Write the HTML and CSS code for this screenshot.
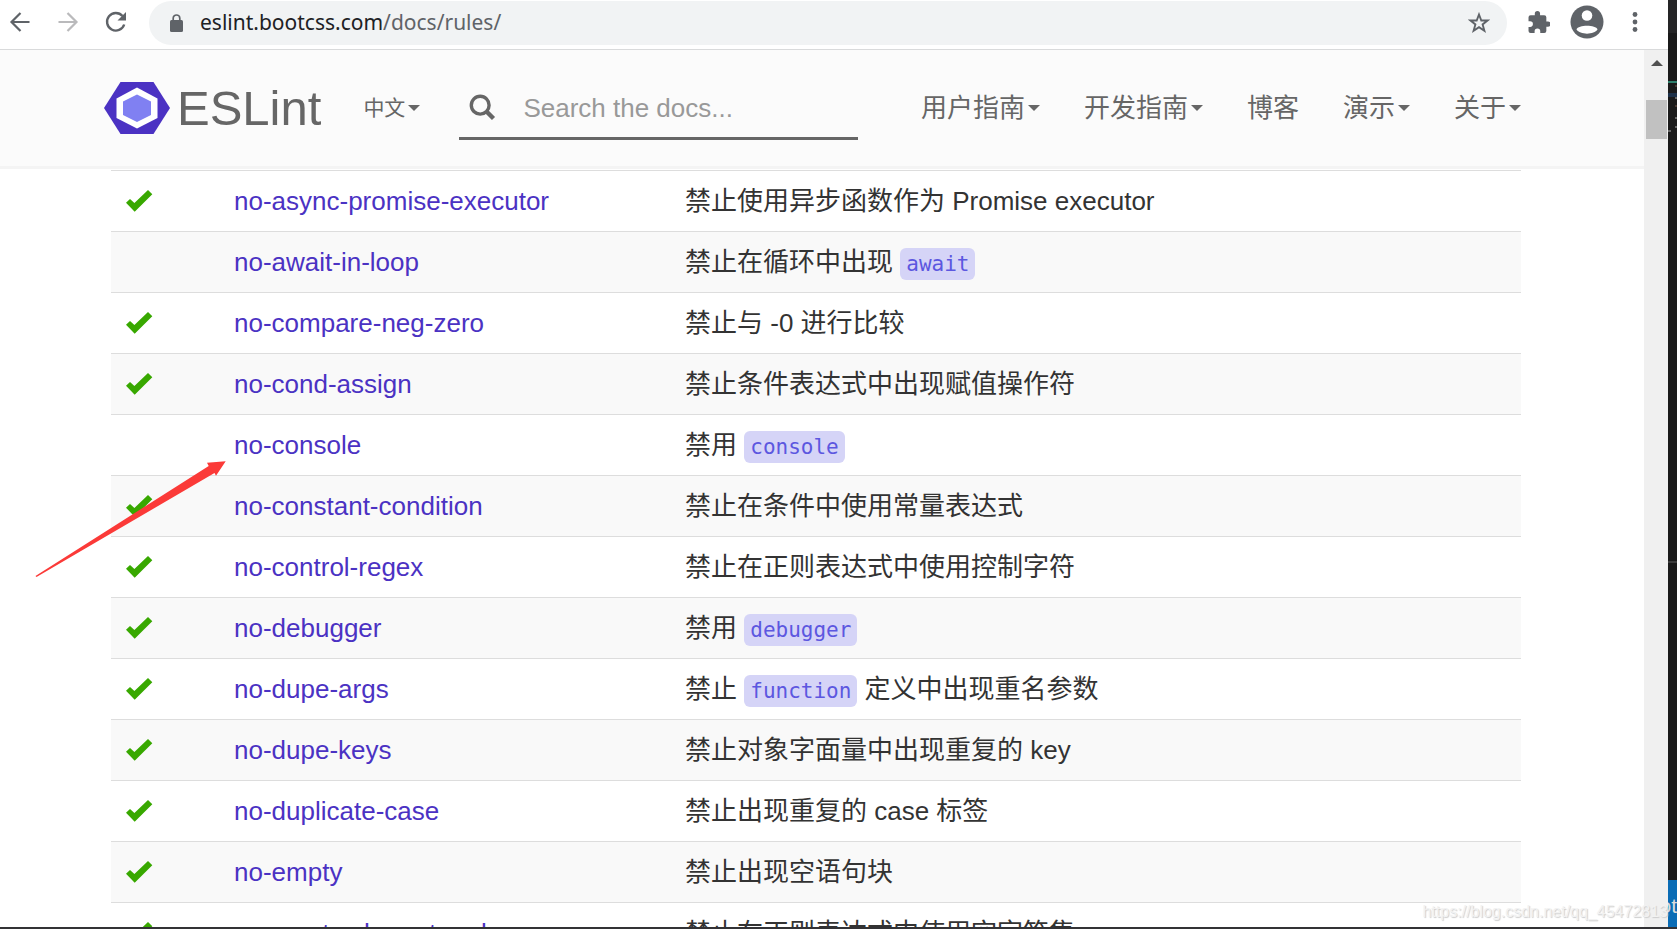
FILE: index.html
```html
<!DOCTYPE html>
<html lang="zh-CN">
<head>
<meta charset="utf-8">
<title>List of available rules - ESLint</title>
<link rel="stylesheet" href="styles.css">
</head>
<body>
<svg class="defs" aria-hidden="true">
  <symbol id="check" viewBox="0 0 27 22"><path d="M0 12.7 4 9l4.400 4L22 0l4.300 4.300L8.700 21.800z" fill="currentColor"/></symbol>
</svg>
<div class="desktop">
  <div class="browser">
    <div class="toolbar">
      <div class="toolbar-nav">
        <button type="button" aria-label="Back"><svg viewBox="0 0 22 22"><path d="M20.500 11H2.500M11.500 2 2.500 11l9 9" fill="none" stroke="#5f6368" stroke-width="2.200"/></svg></button>
        <button type="button" aria-label="Forward"><svg viewBox="0 0 22 22"><path d="M1.500 11h18M10.500 2l9 9-9 9" fill="none" stroke="#bababc" stroke-width="2.200"/></svg></button>
        <button type="button" aria-label="Reload"><svg viewBox="0 0 22 22"><path d="M19.200 13.500A8.800 8.800 0 1 1 17.500 5" fill="none" stroke="#5f6368" stroke-width="2.400"/><path d="M21 1v8.500h-8.500z" fill="#5f6368"/></svg></button>
      </div>
      <div class="address">
        <svg class="lock" viewBox="0 0 13 18"><rect x="0" y="6" width="13" height="12" rx="1.500" fill="#5f6368"/><path d="M3.200 7V4.300a3.300 3.300 0 0 1 6.600 0V7" fill="none" stroke="#5f6368" stroke-width="1.700"/></svg>
        <span class="url">eslint.bootcss.com<span class="path">/docs/rules/</span></span>
        <button type="button" aria-label="Bookmark"><svg viewBox="0 0 22 22"><path d="m11 2.500 2.300 6h6.200l-4.900 3.900 1.800 6.400L11 15.100l-5.400 3.700 1.800-6.400-4.900-3.900h6.200z" fill="none" stroke="#5f6368" stroke-width="1.900"/></svg></button>
      </div>
      <div class="toolbar-tools">
        <button type="button" aria-label="Extensions"><svg viewBox="1.500 1 21 21"><path d="M20.500 11H19V7a2 2 0 0 0-2-2h-4V3.500a2.500 2.500 0 0 0-5 0V5H4a2 2 0 0 0-2 2v3.800h1.500a2.700 2.700 0 0 1 0 5.400H2V20a2 2 0 0 0 2 2h3.800v-1.500a2.700 2.700 0 0 1 5.400 0V22H17a2 2 0 0 0 2-2v-4h1.500a2.500 2.500 0 0 0 0-5z" fill="#5f6368"/></svg></button>
        <button type="button" class="avatar" aria-label="Profile"><svg viewBox="0 0 34 34"><circle cx="17" cy="17" r="16.500" fill="#5f6368"/><circle cx="17" cy="10.500" r="5.300" fill="#fff"/><path d="M6.500 24.500C8 19.500 26 19.500 27.500 24.500 24 30 10 30 6.500 24.500z" fill="#fff"/></svg></button>
        <button type="button" class="menu" aria-label="Menu"><svg viewBox="0 0 6 22"><g fill="#5f6368"><circle cx="3" cy="3.500" r="2.400"/><circle cx="3" cy="11" r="2.400"/><circle cx="3" cy="18.500" r="2.400"/></g></svg></button>
      </div>
    </div>
    <div class="viewport">
      <div class="page">
        <header class="navbar">
          <a class="brand" href="#"><svg viewBox="0 0 66 52"><path d="M16.500 0h33L66 26 49.500 52h-33L0 26z" fill="#4b32c3"/><path d="M33 5.500 53.500 16.500v19.500L33 46.500 12.500 36V16.500z" fill="#fff"/><path d="M33 12.500 47 19.500v13.500L33 40 19 33V19.500z" fill="#8080f2"/></svg>ESLint</a>
          <a class="lang" href="#">中文<i class="caret"></i></a>
          <label class="search">
            <svg viewBox="0 0 27 27"><circle cx="11.200" cy="11.200" r="8.900" fill="none" stroke="#666" stroke-width="3.400"/><path d="m17.500 17.500 7 7" stroke="#666" stroke-width="4.400"/></svg>
            <input type="text" placeholder="Search the docs..." aria-label="Search the docs">
          </label>
          <nav class="links">
            <a href="#">用户指南<i class="caret"></i></a>
            <a href="#">开发指南<i class="caret"></i></a>
            <a href="#">博客</a>
            <a href="#">演示<i class="caret"></i></a>
            <a href="#">关于<i class="caret"></i></a>
          </nav>
        </header>
        <main>
          <table class="rules">
            <tbody>
              <tr><td class="state"><svg><use href="#check"/></svg></td><td class="name"><a href="#">no-async-promise-executor</a></td><td>禁止使用异步函数作为 Promise executor</td></tr>
              <tr><td class="state"></td><td class="name"><a href="#">no-await-in-loop</a></td><td>禁止在循环中出现 <code>await</code></td></tr>
              <tr><td class="state"><svg><use href="#check"/></svg></td><td class="name"><a href="#">no-compare-neg-zero</a></td><td>禁止与 -0 进行比较</td></tr>
              <tr><td class="state"><svg><use href="#check"/></svg></td><td class="name"><a href="#">no-cond-assign</a></td><td>禁止条件表达式中出现赋值操作符</td></tr>
              <tr><td class="state"></td><td class="name"><a href="#">no-console</a></td><td>禁用 <code>console</code></td></tr>
              <tr><td class="state"><svg><use href="#check"/></svg></td><td class="name"><a href="#">no-constant-condition</a></td><td>禁止在条件中使用常量表达式</td></tr>
              <tr><td class="state"><svg><use href="#check"/></svg></td><td class="name"><a href="#">no-control-regex</a></td><td>禁止在正则表达式中使用控制字符</td></tr>
              <tr><td class="state"><svg><use href="#check"/></svg></td><td class="name"><a href="#">no-debugger</a></td><td>禁用 <code>debugger</code></td></tr>
              <tr><td class="state"><svg><use href="#check"/></svg></td><td class="name"><a href="#">no-dupe-args</a></td><td>禁止 <code>function</code> 定义中出现重名参数</td></tr>
              <tr><td class="state"><svg><use href="#check"/></svg></td><td class="name"><a href="#">no-dupe-keys</a></td><td>禁止对象字面量中出现重复的 key</td></tr>
              <tr><td class="state"><svg><use href="#check"/></svg></td><td class="name"><a href="#">no-duplicate-case</a></td><td>禁止出现重复的 case 标签</td></tr>
              <tr><td class="state"><svg><use href="#check"/></svg></td><td class="name"><a href="#">no-empty</a></td><td>禁止出现空语句块</td></tr>
              <tr><td class="state"><svg><use href="#check"/></svg></td><td class="name"><a href="#">no-empty-character-class</a></td><td>禁止在正则表达式中使用空字符集</td></tr>
            </tbody>
          </table>
        </main>
      </div>
      <div class="scrollbar"><svg viewBox="0 0 12 6"><path d="M6 0l6 6H0z" fill="#505050"/></svg><div class="thumb"></div></div>
    </div>
  </div>
  <aside class="editor">
    <svg class="minimap" viewBox="0 0 9 140" aria-hidden="true"><path d="M0 0h9v33H0z" fill="#252526"/><path d="M0 82h9" stroke="#2f7f6c" stroke-width="2"/><path d="M0 95h9" stroke="#1d3048" stroke-width="4"/><path d="M7 86h2M7 106h2" stroke="#7a5a4c" stroke-width="1"/><path d="M7 98h2M7 118h2M7 127h2M0 131h3" stroke="#666" stroke-width="2"/></svg>
    <div class="divider"></div>
    <div class="status">ot</div>
  </aside>
</div>
<svg class="pointer" viewBox="0 0 192 118" aria-hidden="true"><path d="M.500 116 173.700 6 172 2.700 190.700 1.300 181 15.700 179.500 13 1.500 117z" fill="#fb3a38"/></svg>
<div class="watermark">https://blog.csdn.net/qq_45472813</div>
</body>
</html>
```
FILE: styles.css
```css
* { box-sizing: border-box; }
body {
  margin: 0;
  height: 100vh;
  overflow: hidden;
  position: relative;
  background: #fff;
  color: #333;
  font: 26px/36px "Liberation Sans", "Noto Sans CJK SC", sans-serif;
}
a { text-decoration: none; color: #4b32c3; }
button { border: 0; padding: 0; background: none; display: flex; }
button svg { width: 22px; height: 22px; }
svg { display: block; flex: none; }
.defs { position: absolute; width: 0; height: 0; }

.desktop { display: flex; height: 100%; border-bottom: 2px solid #323235; }
.browser { flex: 1; min-width: 0; display: flex; flex-direction: column; }

.toolbar {
  flex: none;
  display: flex;
  align-items: center;
  height: 50px;
  padding: 0 30px 5px 9px;
  border-bottom: 1px solid #d9dadb;
}
.toolbar-nav { display: flex; gap: 26px; }
.address {
  flex: 1;
  display: flex;
  align-items: center;
  height: 44px;
  margin: 2px 21px 0 22px;
  padding: 0 17px 0 21px;
  border-radius: 22px;
  background: #f1f3f4;
}
.lock { width: 13px; height: 18px; }
.url { flex: 1; margin-left: 17px; padding-bottom: 2px; color: #202124; font: 21px/30px "Noto Sans", sans-serif; }
.path { color: #5f6368; }
.toolbar-tools { display: flex; align-items: center; gap: 20px; }
.avatar svg { width: 34px; height: 34px; }
.menu { margin-left: 8px; }
.menu svg { width: 6px; }

.viewport { flex: 1; min-height: 0; display: flex; }
.page { flex: 1; min-width: 0; overflow: hidden; }
.navbar {
  display: flex;
  align-items: center;
  height: 119px;
  padding: 0 123px 1px 104px;
  border-bottom: 3px solid #f4f4f4;
  background: #fbfbfb;
}
.navbar a { color: #666; display: flex; align-items: center; white-space: nowrap; }
.navbar .brand { gap: 7px; font-size: 49px; }
.brand svg { width: 66px; height: 52px; }
.navbar .lang { margin-left: 42px; font-size: 21px; }
.caret {
  margin-left: 3px;
  border: 6px solid transparent;
  border-top-color: #666;
  border-bottom: 0;
}
.search {
  display: flex;
  align-items: center;
  width: 399px;
  height: 64px;
  margin-left: 39px;
  padding: 3px 0 0 10px;
  border-bottom: 3px solid #666;
}
.search svg { width: 27px; height: 27px; }
.search input {
  flex: 1;
  min-width: 0;
  margin-left: 27px;
  padding: 1px 0 0;
  border: 0;
  background: none;
  color: #555;
  font: inherit;
}
.search input::placeholder { color: #999; opacity: 1; }
.links { display: flex; gap: 44px; margin-left: auto; }

main { padding: 1px 123px 0 111px; }
.rules { width: 100%; border-collapse: separate; border-spacing: 0; table-layout: fixed; }
.rules td { padding: 12px; border-top: 1px solid #ddd; white-space: nowrap; }
.rules tr:nth-child(even) { background: #f9f9f9; }
.rules .state { width: 111px; padding: 0 15px; color: #38a800; }
.state svg { width: 27px; height: 22px; }
.rules .name { width: 451px; }
code {
  padding: 4px 6px;
  border-radius: 6px;
  background: #d5d4f7;
  color: #5c57e0;
  font: 21px/24px "DejaVu Sans Mono", monospace;
}

.scrollbar {
  flex: none;
  width: 24px;
  padding: 10px 1px 0 2px;
  background: #f0f0f0;
}
.scrollbar svg { width: 12px; height: 6px; margin: 0 auto 34px; }
.thumb { height: 39px; background: #c1c1c1; }

.editor {
  flex: none;
  width: 9px;
  display: flex;
  flex-direction: column;
  overflow: hidden;
  background: #1a1a1a;
}
.minimap { width: 9px; height: 140px; }
.divider { flex: 1; background: linear-gradient(#3c3c3c, #3c3c3c) 0 57% / 100% 2px no-repeat; }
.status {
  height: 47px;
  padding-top: 8px;
  display: flex;
  justify-content: flex-end;
  background: #0a6cb5;
  color: #ddd;
  font-size: 21px;
}

.pointer { position: absolute; left: 35px; top: 460px; width: 192px; height: 118px; }
.watermark {
  position: absolute;
  right: 9px;
  bottom: 7px;
  color: #f2f2f2;
  font-size: 16px;
  line-height: 20px;
  text-shadow: 1px 1px 1px #ccc;
}
```
